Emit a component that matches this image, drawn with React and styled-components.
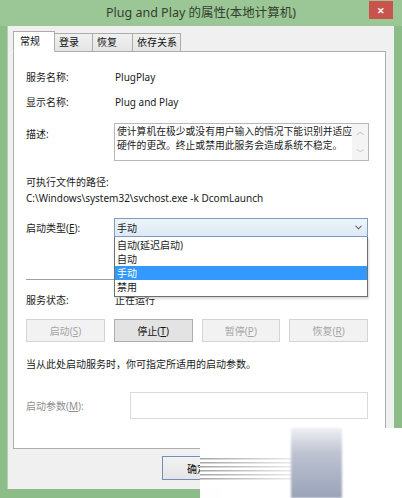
import React from "react";
import styled, { createGlobalStyle } from "styled-components";

const GlobalStyle = createGlobalStyle`
  html, body {
    margin: 0;
    padding: 0;
    background: #fff;
  }
  body {
    font-family: "Noto Sans", "Noto Sans CJK SC", sans-serif;
  }
`;

const startTypes = ["自动(延迟启动)", "自动", "手动", "禁用"];

const serviceButtons = [
  { label: "启动", key: "S", enabled: false },
  { label: "停止", key: "T", enabled: true },
  { label: "暂停", key: "P", enabled: false },
  { label: "恢复", key: "R", enabled: false },
];

function App() {
  return (
    <>
      <GlobalStyle />
      <Window>
        <TitleBar>
          <span />
          <Title>Plug and Play 的属性(本地计算机)</Title>
          <CloseButton>✕</CloseButton>
        </TitleBar>

        <Client>
          <TabStrip>
            <Tab $active $w={42}>常规</Tab>
            <Tab $w={38}>登录</Tab>
            <Tab $w={40}>恢复</Tab>
            <Tab $w={48}>依存关系</Tab>
          </TabStrip>

          <Panel>
            <FieldRow $mt={0}>
              <Label>服务名称:</Label>
              <Value>PlugPlay</Value>
            </FieldRow>
            <FieldRow $mt={9}>
              <Label>显示名称:</Label>
              <Value>Plug and Play</Value>
            </FieldRow>
            <FieldRow $mt={13} $top>
              <Label $pt={3}>描述:</Label>
              <DescBox>
                <DescText>
                  使计算机在极少或没有用户输入的情况下能识别并适应
                  <br />
                  硬件的更改。终止或禁用此服务会造成系统不稳定。
                </DescText>
                <ScrollBar>
                  <Arrow>︿</Arrow>
                  <Arrow>﹀</Arrow>
                </ScrollBar>
              </DescBox>
            </FieldRow>

            <Line $mt={13}>可执行文件的路径:</Line>
            <Line $mt={0}>C:\Windows\system32\svchost.exe -k DcomLaunch</Line>

            <FieldRow $mt={12}>
              <Label>
                启动类型(<u>E</u>):
              </Label>
              <ComboWrap>
                <Combo>
                  <span>手动</span>
                  <Chevron viewBox="0 0 8 5">
                    <path d="M0.5 0.5 L4 4 L7.5 0.5" />
                  </Chevron>
                </Combo>
                <DropList>
                  {startTypes.map((t) => (
                    <DropItem key={t} $selected={t === "手动"}>
                      {t}
                    </DropItem>
                  ))}
                </DropList>
              </ComboWrap>
            </FieldRow>

            <Separator />

            <FieldRow $mt={12}>
              <Label>服务状态:</Label>
              <Value>正在运行</Value>
            </FieldRow>

            <ButtonRow>
              {serviceButtons.map((b) => (
                <ActionButton key={b.key} $enabled={b.enabled}>
                  {b.label}(<u>{b.key}</u>)
                </ActionButton>
              ))}
            </ButtonRow>

            <Line $mt={14}>当从此处启动服务时，你可指定所适用的启动参数。</Line>

            <ParamRow>
              <Label $disabled>
                启动参数(<u>M</u>):
              </Label>
              <ParamInput />
            </ParamRow>
          </Panel>

          <Footer>
            <DialogButton $default>确定</DialogButton>
            <DialogButton>取消</DialogButton>
            <DialogButton>应用(A)</DialogButton>
          </Footer>
        </Client>

        <Watermark>
          <Streaks />
          <WatermarkBar />
        </Watermark>
      </Window>
    </>
  );
}

const Window = styled.div`
  position: relative;
  width: 402px;
  height: 498px;
  background: #8cbc87;
  display: flex;
  flex-direction: column;
  overflow: hidden;
  font-size: 10px;
  color: #1a1a1a;
`;

const TitleBar = styled.div`
  height: 26px;
  display: grid;
  grid-template-columns: 1fr auto 1fr;
  align-items: start;
  background: #9bc796;
`;

const Title = styled.div`
  margin-top: 5px;
  font-size: 12.5px;
  line-height: 16px;
  color: #34402f;
  white-space: nowrap;
`;

const CloseButton = styled.div`
  justify-self: end;
  margin: 1px 9px 0 0;
  width: 24px;
  height: 18px;
  background: #c9544e;
  color: #fff;
  font-size: 9px;
  font-weight: bold;
  display: flex;
  align-items: center;
  justify-content: center;
`;

const Client = styled.div`
  flex: 1;
  margin: 0 8px 9px 7px;
  padding: 6px 8px 0 5px;
  background: #f0f0f0;
  border-left: 1px solid #b9cdb6;
  display: flex;
  flex-direction: column;
`;

const TabStrip = styled.div`
  display: flex;
  align-items: flex-end;
  height: 20px;
  margin-bottom: -1px;
  position: relative;
  z-index: 1;
`;

const Tab = styled.div`
  box-sizing: border-box;
  width: ${(p) => p.$w}px;
  height: ${(p) => (p.$active ? 21 : 19)}px;
  border: 1px solid #acacac;
  border-bottom: ${(p) => (p.$active ? "1px solid #fff" : "1px solid #acacac")};
  border-left: ${(p) => (p.$active ? "1px solid #acacac" : "none")};
  background: ${(p) =>
    p.$active ? "#fff" : "linear-gradient(#f0f0f0, #e5e5e5)"};
  font-size: 10px;
  line-height: 17px;
  padding-left: ${(p) => (p.$active ? 6 : 4)}px;
  padding-top: ${(p) => (p.$active ? 1 : 0)}px;
  color: #111;
`;

const Panel = styled.div`
  height: 398px;
  box-sizing: border-box;
  background: #fff;
  border: 1px solid #adadad;
  padding: 17px 17px 0 12px;
  display: flex;
  flex-direction: column;
`;

const FieldRow = styled.div`
  display: grid;
  grid-template-columns: 88px 1fr;
  align-items: ${(p) => (p.$top ? "start" : "center")};
  margin-top: ${(p) => p.$mt}px;
`;

const Label = styled.div`
  line-height: 16px;
  padding-top: ${(p) => p.$pt || 0}px;
  color: ${(p) => (p.$disabled ? "#8f8f8f" : "#1a1a1a")};
  white-space: nowrap;
`;

const Value = styled.div`
  line-height: 16px;
  padding-left: 1px;
`;

const Line = styled.div`
  line-height: 16px;
  margin-top: ${(p) => p.$mt}px;
  white-space: nowrap;
`;

const DescBox = styled.div`
  height: 38px;
  box-sizing: border-box;
  border: 1px solid #b6b8bd;
  display: flex;
  justify-content: space-between;
`;

const DescText = styled.div`
  padding: 1px 0 0 2px;
  line-height: 14px;
  font-size: 9.8px;
  white-space: nowrap;
`;

const ScrollBar = styled.div`
  width: 16px;
  background: #f4f4f4;
  display: flex;
  flex-direction: column;
  justify-content: space-between;
  align-items: center;
`;

const Arrow = styled.span`
  color: #b4b4b4;
  font-size: 8px;
  line-height: 14px;
`;

const ComboWrap = styled.div`
  position: relative;
`;

const Combo = styled.div`
  height: 19px;
  box-sizing: border-box;
  border: 1px solid #7f9db9;
  background: linear-gradient(#edf4fb, #dde9f5);
  display: flex;
  align-items: center;
  justify-content: space-between;
  padding: 0 5px 0 2px;
`;

const Chevron = styled.svg`
  width: 7px;
  height: 5px;
  fill: none;
  stroke: #555;
  stroke-width: 1.2;
`;

const DropList = styled.div`
  position: absolute;
  top: 19px;
  left: 0;
  right: 0;
  background: #fff;
  border: 1px solid #6f6f6f;
  border-top: none;
  padding: 1px 0 2px;
  z-index: 5;
  box-shadow: 1px 2px 2px rgba(0, 0, 0, 0.15);
`;

const DropItem = styled.div`
  height: 14px;
  line-height: 14px;
  padding-left: 2px;
  background: ${(p) => (p.$selected ? "#3399ff" : "transparent")};
  color: ${(p) => (p.$selected ? "#fff" : "#1a1a1a")};
`;

const Separator = styled.div`
  margin-top: 42px;
  height: 1px;
  background: #a0a0a0;
`;

const ButtonRow = styled.div`
  display: grid;
  grid-template-columns: repeat(4, 1fr);
  gap: 9px;
  margin-top: 11px;
`;

const ActionButton = styled.div`
  height: 23px;
  box-sizing: border-box;
  border: 1px solid ${(p) => (p.$enabled ? "#adadad" : "#d4d4d4")};
  background: ${(p) => (p.$enabled ? "#e3e3e3" : "#f2f2f2")};
  color: ${(p) => (p.$enabled ? "#111" : "#a5a5a5")};
  display: flex;
  align-items: center;
  justify-content: center;
`;

const ParamRow = styled.div`
  display: grid;
  grid-template-columns: 104px 1fr;
  align-items: center;
  margin-top: 20px;
`;

const ParamInput = styled.div`
  height: 27px;
  box-sizing: border-box;
  border: 1px solid #dadada;
  background: #fff;
`;

const Footer = styled.div`
  display: flex;
  justify-content: flex-end;
  gap: 7px;
  padding-top: 7px;
`;

const DialogButton = styled.div`
  width: 70px;
  height: 24px;
  box-sizing: border-box;
  border: 1px solid ${(p) => (p.$default ? "#6f8fb6" : "#adadad")};
  background: linear-gradient(#f2f2f2, #e5e5e5);
  display: flex;
  align-items: center;
  justify-content: center;
  color: #111;
`;

const Watermark = styled.div`
  position: absolute;
  left: 200px;
  top: 428px;
  right: 0;
  bottom: 0;
  background: linear-gradient(
      to bottom,
      rgba(255, 255, 255, 0) 0,
      rgba(255, 255, 255, 0.9) 22px
    ),
    linear-gradient(to right, rgba(255, 255, 255, 0.85), #fff 40px);
`;

const Streaks = styled.div`
  position: absolute;
  left: 0;
  width: 120px;
  top: 30px;
  height: 22px;
  background: repeating-linear-gradient(
    to bottom,
    rgba(90, 90, 90, 0.55) 0,
    rgba(90, 90, 90, 0.55) 1px,
    rgba(255, 255, 255, 0) 2px,
    rgba(255, 255, 255, 0) 4px
  );
  -webkit-mask-image: linear-gradient(to right, #000, rgba(0, 0, 0, 0));
  mask-image: linear-gradient(to right, #000, rgba(0, 0, 0, 0));
`;

const WatermarkBar = styled.div`
  position: absolute;
  left: 91px;
  width: 51px;
  top: 0;
  bottom: 0;
  background: linear-gradient(
    to bottom,
    rgba(200, 205, 218, 0.3) 0,
    #bfc4d2 35%,
    #99a2b8 100%
  );
  filter: blur(1px);
`;

export default App;
